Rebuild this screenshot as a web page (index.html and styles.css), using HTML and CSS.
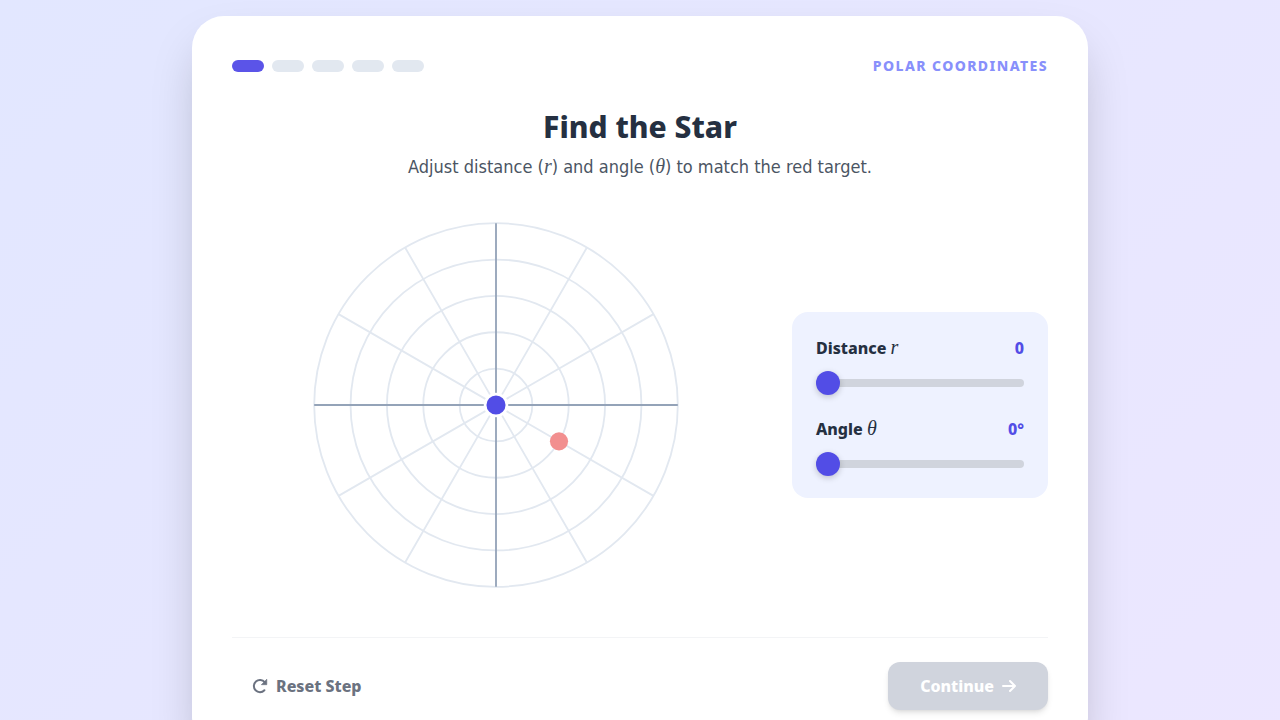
FILE: index.html
```
<!DOCTYPE html>
<html lang="en">
<head>
    <meta charset="UTF-8">
    <meta name="viewport" content="width=device-width, initial-scale=1.0">
    <title>Polar Coordinates</title>
    <link rel="stylesheet" href="styles.css">
</head>
<body>
  <main class="card">
    <header class="top">
      <div class="steps">
        <span class="step active"></span>
        <span class="step"></span>
        <span class="step"></span>
        <span class="step"></span>
        <span class="step"></span>
      </div>
      <div class="topic">POLAR COORDINATES</div>
    </header>

    <div class="intro">
      <h1>Find the Star</h1>
      <p>Adjust distance (<i class="math">r</i>) and angle (<i class="math">θ</i>) to match the red target.</p>
    </div>

    <div class="lesson">
      <svg class="graph" viewBox="-220 -220 440 440">
        <g class="grid">
          <circle r="40"/>
          <circle r="80"/>
          <circle r="120"/>
          <circle r="160"/>
          <circle r="200"/>
          <path d="M-173.2 -100L173.2 100M-100 -173.2L100 173.2M100 -173.2L-100 173.2M173.2 -100L-173.2 100"/>
        </g>
        <path class="axis" d="M-200 0H200M0 -200V200"/>
        <circle class="target" cx="69.3" cy="40" r="10"/>
        <circle class="point" r="12"/>
      </svg>

      <form class="controls">
        <div class="control">
          <div class="row">
            <label for="distance">Distance <i class="math">r</i></label>
            <output for="distance">0</output>
          </div>
          <input type="range" id="distance" min="0" max="5" value="0">
        </div>
        <div class="control">
          <div class="row">
            <label for="angle">Angle <i class="math">θ</i></label>
            <output for="angle">0°</output>
          </div>
          <input type="range" id="angle" min="0" max="360" value="0">
        </div>
      </form>
    </div>

    <footer class="actions">
      <button type="button" class="reset">
        <svg width="16" height="16" viewBox="0 0 16 16"><path d="M12.4 12.2A6.1 6.1 0 1 1 12.7 4.2" fill="none" stroke="currentColor" stroke-width="2" stroke-linecap="round"/><path d="M14.8 1.2V6.7H9.3Z" fill="currentColor" stroke="currentColor" stroke-width=".6" stroke-linejoin="round"/></svg>
        Reset Step
      </button>
      <button type="button" class="next" disabled>
        Continue
        <svg width="14" height="16" viewBox="0 0 14 16"><path d="M1 8H13M8 3L13 8L8 13" fill="none" stroke="currentColor" stroke-width="2" stroke-linecap="round" stroke-linejoin="round"/></svg>
      </button>
    </footer>
  </main>
</body>
</html>
```
FILE: styles.css
```
* {
  box-sizing: border-box;
}
body {
  margin: 0;
  padding: 16px;
  min-height: 100vh;
  font-family: "Noto Sans", sans-serif;
  font-size: 16px;
  line-height: 24px;
  color: #253041;
  background: linear-gradient(135deg, #e2e7ff, #ece7ff);
}
.card {
  max-width: 896px;
  margin: 0 auto;
  padding: 40px;
  background: #fff;
  border-radius: 32px;
  box-shadow: 0 25px 50px -12px rgba(0, 0, 0, 0.25);
}
.top {
  display: flex;
  justify-content: space-between;
  align-items: center;
  height: 20px;
  margin-bottom: 32px;
}
.steps {
  display: flex;
  gap: 8px;
}
.step {
  width: 32px;
  height: 12px;
  border-radius: 6px;
  background: #e2e8f0;
}
.step.active {
  background: #5b54e8;
}
.topic {
  font-size: 14px;
  line-height: 20px;
  font-weight: 800;
  letter-spacing: 0.1em;
  color: #8890fb;
}
.intro {
  margin-bottom: 22px;
  text-align: center;
}
h1 {
  margin: 0 0 4px;
  font-size: 30px;
  line-height: 38px;
  font-weight: 800;
}
.intro p {
  margin: 0;
  font-family: Tahoma, "DejaVu Sans Condensed", sans-serif;
  font-size: 18px;
  line-height: 33px;
  color: #4b5563;
}
.math {
  font-family: "Liberation Serif", serif;
  font-size: 20px;
  line-height: 20px;
  font-weight: 400;
}
.lesson {
  display: flex;
  align-items: center;
  gap: 32px;
}
.graph {
  flex: 1;
  min-width: 0;
  height: 400px;
}
.grid {
  fill: none;
  stroke: #e2e8f0;
  stroke-width: 2;
}
.axis {
  stroke: #94a3b8;
  stroke-width: 2;
}
.target {
  fill: #f28f8f;
}
.point {
  fill: #524de6;
  stroke: #fff;
  stroke-width: 3;
}
.controls {
  display: flex;
  flex-direction: column;
  gap: 24px;
  width: 256px;
  padding: 24px;
  border-radius: 16px;
  background: #eef2ff;
}
.row {
  display: flex;
  justify-content: space-between;
  height: 25px;
  margin-bottom: 12px;
  font-weight: 800;
}
.control output {
  color: #524de6;
}
.control input {
  display: block;
  width: 100%;
  height: 20px;
  margin: 0;
  appearance: none;
  background: none;
}
.control input::-webkit-slider-runnable-track {
  height: 8px;
  border-radius: 4px;
  background: #d0d4dd;
}
.control input::-webkit-slider-thumb {
  appearance: none;
  width: 24px;
  height: 24px;
  margin-top: -8px;
  border-radius: 50%;
  background: #524de6;
  box-shadow: 0 2px 6px rgba(0, 0, 0, 0.2);
}
.actions {
  display: flex;
  justify-content: space-between;
  align-items: center;
  margin-top: 32px;
  padding-top: 24px;
  border-top: 1px solid #f3f4f6;
}
button {
  display: flex;
  align-items: center;
  gap: 8px;
  height: 48px;
  border: 0;
  border-radius: 12px;
  font: inherit;
  font-weight: 800;
}
.reset {
  padding: 0 20px;
  color: #6b7280;
  background: none;
}
.next {
  padding: 0 32px;
  color: #fff;
  background: #d0d4dd;
  box-shadow: 0 4px 6px -1px rgba(0, 0, 0, 0.1), 0 2px 4px -2px rgba(0, 0, 0, 0.1);
}
```
